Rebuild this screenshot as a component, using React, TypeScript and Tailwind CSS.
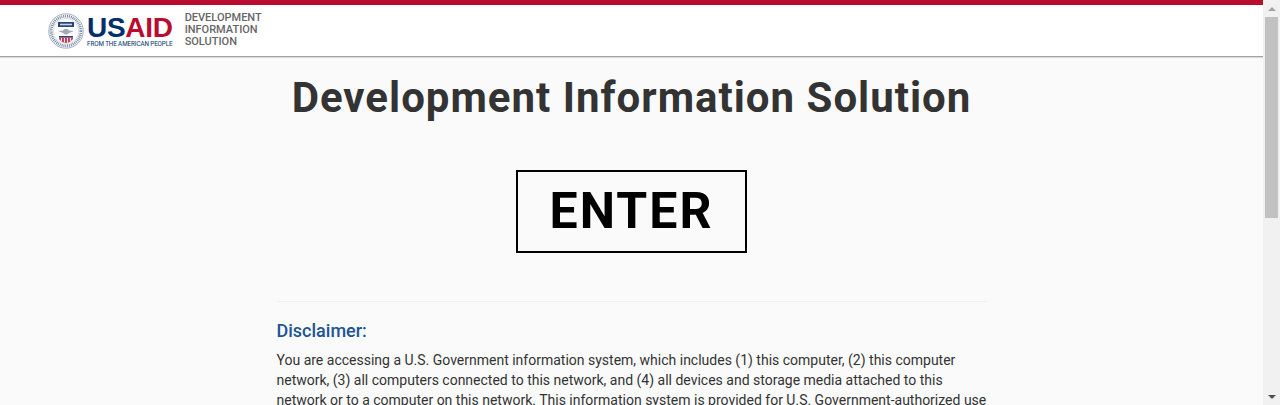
import { ReactNode } from "react";

function Seal() {
  return (
    <svg width="36" height="38" viewBox="0 0 36 38" className="shrink-0">
      <circle cx="18" cy="19" r="17.2" fill="#fff" stroke="#7b8ba3" strokeWidth="0.7" />
      <circle cx="18" cy="19" r="14.8" fill="none" stroke="#7587a3" strokeWidth="2.8" strokeDasharray="1 0.9" />
      <circle cx="18" cy="19" r="12.6" fill="#fff" stroke="#a4aebd" strokeWidth="0.4" />
      <rect x="10" y="10" width="16" height="5" fill="#26457c" />
      <rect x="12" y="11.7" width="12" height="1.6" fill="#c9d2e1" />
      <path d="M10 19 L15 18.6 L16.5 17 H19.5 L21 18.6 L26 19 L21 21 L19 22.5 H17 L15 21 Z" fill="#a0aaba" />
      <rect x="11" y="24" width="14" height="1.6" fill="#26457c" />
      <path d="M11 25.6 H25 V27 L22 30 L18 31 L14 30 L11 27 Z" fill="#c8415c" />
      <path d="M13.5 26 V29.5 M16.5 26 V30.5 M19.5 26 V30.5 M22.5 26 V29.5" stroke="#fff" strokeWidth="0.9" />
    </svg>
  );
}

function Logo() {
  return (
    <div className="flex items-center gap-[3px]">
      <Seal />
      <div className="flex flex-col items-start">
        <div className="font-['Liberation_Sans',sans-serif] font-bold text-[28px] leading-[24px] tracking-[-0.3px] mt-[1px]">
          <span className="text-[#002f6c]">US</span>
          <span className="text-[#ba0c2f]">AID</span>
        </div>
        <div className="font-['Roboto',sans-serif] text-[6.3px] leading-[8px] text-[#002f6c] whitespace-nowrap tracking-[-0.1px]">
          FROM THE AMERICAN PEOPLE
        </div>
      </div>
    </div>
  );
}

function Header() {
  return (
    <header className="h-[57px] shrink-0 border-t-[5px] border-b border-[#ba0c2f] border-b-[#a3a3a3] bg-white shadow-[0_1px_1px_rgba(0,0,0,0.12)] pl-[48px] flex items-start">
      <div className="pt-[7px]">
        <Logo />
      </div>
      <div className="ml-[12px] pt-[7px] text-[#666666] text-[11px] leading-[12px] font-medium">
        DEVELOPMENT
        <br />
        INFORMATION
        <br />
        SOLUTION
      </div>
    </header>
  );
}

function Scrollbar(): ReactNode {
  return (
    <div className="w-[17px] shrink-0 bg-[#f1f1f1] flex flex-col items-center relative">
      <div className="h-[17px] flex items-center justify-center">
        <div className="w-0 h-0 border-x-[4px] border-x-transparent border-b-[4px] border-b-[#a3a3a3]" />
      </div>
      <div className="w-[13px] h-[201px] bg-[#c1c1c1]" />
      <div className="absolute bottom-0 h-[17px] flex items-center justify-center">
        <div className="w-0 h-0 border-x-[4px] border-x-transparent border-t-[4px] border-t-[#505050]" />
      </div>
    </div>
  );
}

export default function App() {
  return (
    <div className="h-[405px] w-[1280px] overflow-hidden flex bg-[#fafafa] font-['Roboto',sans-serif]">
      <div className="flex-1 min-w-0 flex flex-col">
        <Header />
        <main className="flex flex-col items-center">
          <h1 className="mt-[16px] text-[42px] leading-[50px] font-bold text-[#333333] tracking-[1px]">
            Development Information Solution
          </h1>
          <button className="mt-[47px] w-[231px] h-[83px] border-2 border-black text-black text-[50px] font-bold tracking-[2px] flex items-center justify-center">
            ENTER
          </button>
          <section className="mt-[48px] w-[710px] border-t border-[#eeeeee] pt-[18px]">
            <h2 className="text-[18px] leading-[22px] font-medium text-[#205493]">Disclaimer:</h2>
            <p className="mt-[8px] text-[14px] leading-[20px] text-[#333333]">
              You are accessing a U.S. Government information system, which includes (1) this computer, (2) this computer
              network, (3) all computers connected to this network, and (4) all devices and storage media attached to this
              network or to a computer on this network. This information system is provided for U.S. Government-authorized use
              only.
            </p>
          </section>
        </main>
      </div>
      <Scrollbar />
    </div>
  );
}
